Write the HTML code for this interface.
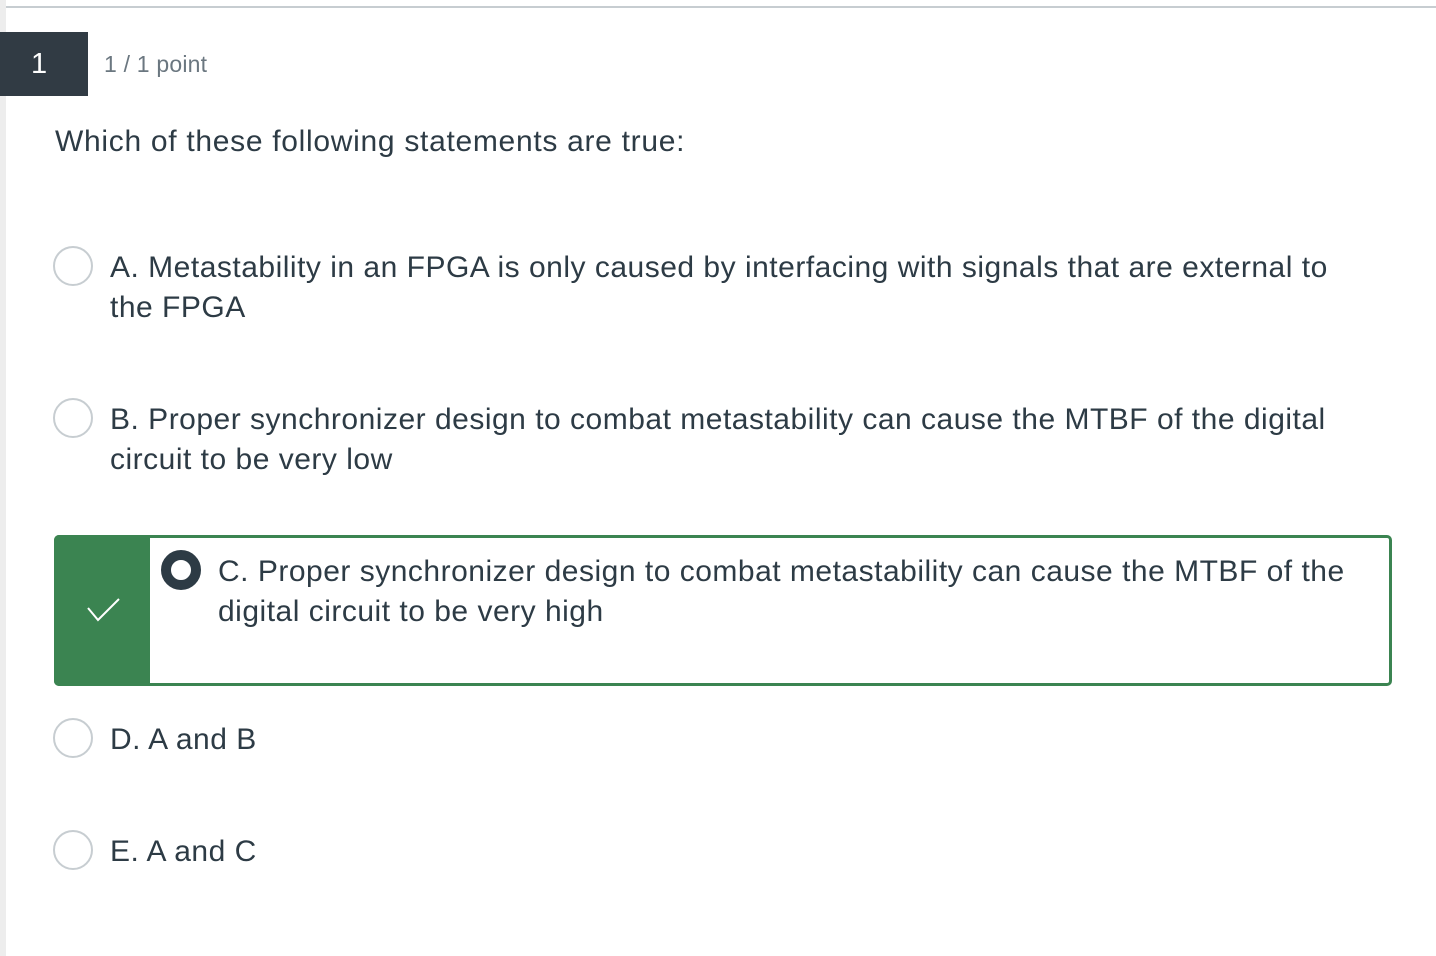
<!DOCTYPE html>
<html><head><style>
body{margin:0;width:1436px;height:956px;background:#fff;font-family:"Liberation Sans",sans-serif;color:#2d3b45;position:relative;overflow:hidden}
.strip{position:absolute;left:0;top:0;width:6px;height:956px;background:#ededed}
.topline{position:absolute;left:6px;top:6px;right:0;height:2px;background:#c7cdd1}
.num{position:absolute;left:0;top:32px;width:88px;height:64px;background:#313b44;color:#fff;font-size:29px;line-height:64px;text-indent:31px}
.pts{position:absolute;left:104px;top:51px;font-size:23px;color:#6b7780;letter-spacing:0.2px}
.q{position:absolute;left:55px;top:125px;font-size:30px;letter-spacing:0.7px}
.opt{position:absolute;left:110px;font-size:30px;line-height:40px;letter-spacing:0.5px;width:1300px;white-space:nowrap}
.r{position:absolute;border:2px solid #c7cdd1;border-radius:50%;left:53px;box-sizing:border-box;width:40px;height:40px}
.box{position:absolute;left:54px;top:535px;width:1338px;height:151px;border:3px solid #3b8451;border-radius:5px;box-sizing:border-box}
.gp{position:absolute;left:54px;top:535px;width:96px;height:151px;background:#3b8451;border-radius:5px 0 0 5px}
.sel{position:absolute;left:161px;top:550px;width:40px;height:40px;border-radius:50%;box-sizing:border-box;border:10px solid #2d3b45;background:#fff}
</style></head><body>
<div class="strip"></div><div class="topline"></div>
<div class="num">1</div>
<div class="pts">1 / 1 point</div>
<div class="q">Which of these following statements are true:</div>
<div class="r" style="top:246px"></div>
<div class="opt" style="top:248px">A. Metastability in an FPGA is only caused by interfacing with signals that are external to<br>the FPGA</div>
<div class="r" style="top:398px"></div>
<div class="opt" style="top:400px">B. Proper synchronizer design to combat metastability can cause the MTBF of the digital<br>circuit to be very low</div>
<div class="box"></div><div class="gp"></div>
<svg style="position:absolute;left:86px;top:596px" width="36" height="28"><path d="M2 12 L12 24 L33 3" stroke="#fff" stroke-width="2" fill="none"/></svg>
<div class="sel"></div>
<div class="opt" style="top:552px;left:218px;width:1150px">C. Proper synchronizer design to combat metastability can cause the MTBF of the<br>digital circuit to be very high</div>
<div class="r" style="top:718px"></div>
<div class="opt" style="top:720px">D. A and B</div>
<div class="r" style="top:830px"></div>
<div class="opt" style="top:832px">E. A and C</div>
</body></html>
